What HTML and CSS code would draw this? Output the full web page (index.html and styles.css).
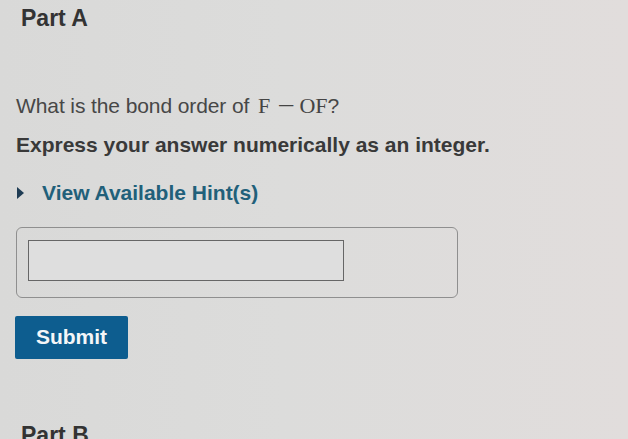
FILE: index.html
```html
<!DOCTYPE html>
<html>
<head>
<meta charset="utf-8">
<link rel="stylesheet" href="styles.css">
</head>
<body>
<div class="page">
  <h2 class="part-title">Part A</h2>
  <p class="question">What is the bond order of <span class="math">F<span class="minus">−</span>OF</span>?</p>
  <p class="instruction">Express your answer numerically as an integer.</p>
  <div class="hint"><span class="caret"></span><span class="hint-text">View Available Hint(s)</span></div>
  <div class="answer-box"><div class="answer-input"></div></div>
  <button class="submit">Submit</button>
  <h2 class="part-title part-b">Part B</h2>
</div>
</body>
</html>
```
FILE: styles.css
```css
html, body {
  margin: 0;
  padding: 0;
}
body {
  width: 628px;
  height: 439px;
  overflow: hidden;
  background: linear-gradient(90deg, #d9d9d8 0%, #dcdcdb 45%, #e1dddc 100%);
  font-family: "Liberation Sans", Arial, sans-serif;
  color: #3a3a3a;
}
.page {
  padding: 5px 0 0 16px;
}
.part-title {
  margin: 0;
  padding-left: 5px;
  font-size: 23px;
  line-height: 26px;
  font-weight: bold;
  color: #333;
}
.question {
  margin: 63px 0 0 0;
  font-size: 21px;
  line-height: 24px;
  color: #474747;
  letter-spacing: -0.1px;
}
.math {
  font-family: "Liberation Serif", "Times New Roman", serif;
  font-size: 22px;
  line-height: 24px;
  margin-left: 3px;
  color: #444;
}
.minus {
  display: inline-block;
  margin: 0 7px 0 10px;
  transform: scaleX(1.4);
}
.instruction {
  margin: 14px 0 0 0;
  font-size: 21px;
  line-height: 25px;
  font-weight: bold;
  color: #393939;
}
.hint {
  margin-top: 23px;
  display: flex;
  align-items: center;
  height: 25px;
}
.caret {
  width: 0;
  height: 0;
  margin-left: 1px;
  border-top: 6.5px solid transparent;
  border-bottom: 6.5px solid transparent;
  border-left: 7px solid #1f3c54;
}
.hint-text {
  margin-left: 18px;
  font-size: 21px;
  line-height: 25px;
  font-weight: bold;
  color: #21607a;
}
.answer-box {
  margin-top: 22px;
  width: 440px;
  height: 69px;
  border: 1px solid #8f8f8f;
  border-radius: 6px;
  display: flex;
  align-items: flex-start;
}
.answer-input {
  margin: 12px 0 0 11px;
  width: 314px;
  height: 39px;
  border: 1px solid #666;
  background: #dedede;
}
.submit {
  display: block;
  margin: 18px 0 0 -1px;
  width: 113px;
  height: 43px;
  border: none;
  border-radius: 2px;
  background: #0d5d8f;
  color: #f4f6f8;
  font-family: "Liberation Sans", Arial, sans-serif;
  font-size: 21px;
  font-weight: bold;
  padding: 0 0 2px 0;
}
.part-b {
  margin-top: 63px;
}
```
